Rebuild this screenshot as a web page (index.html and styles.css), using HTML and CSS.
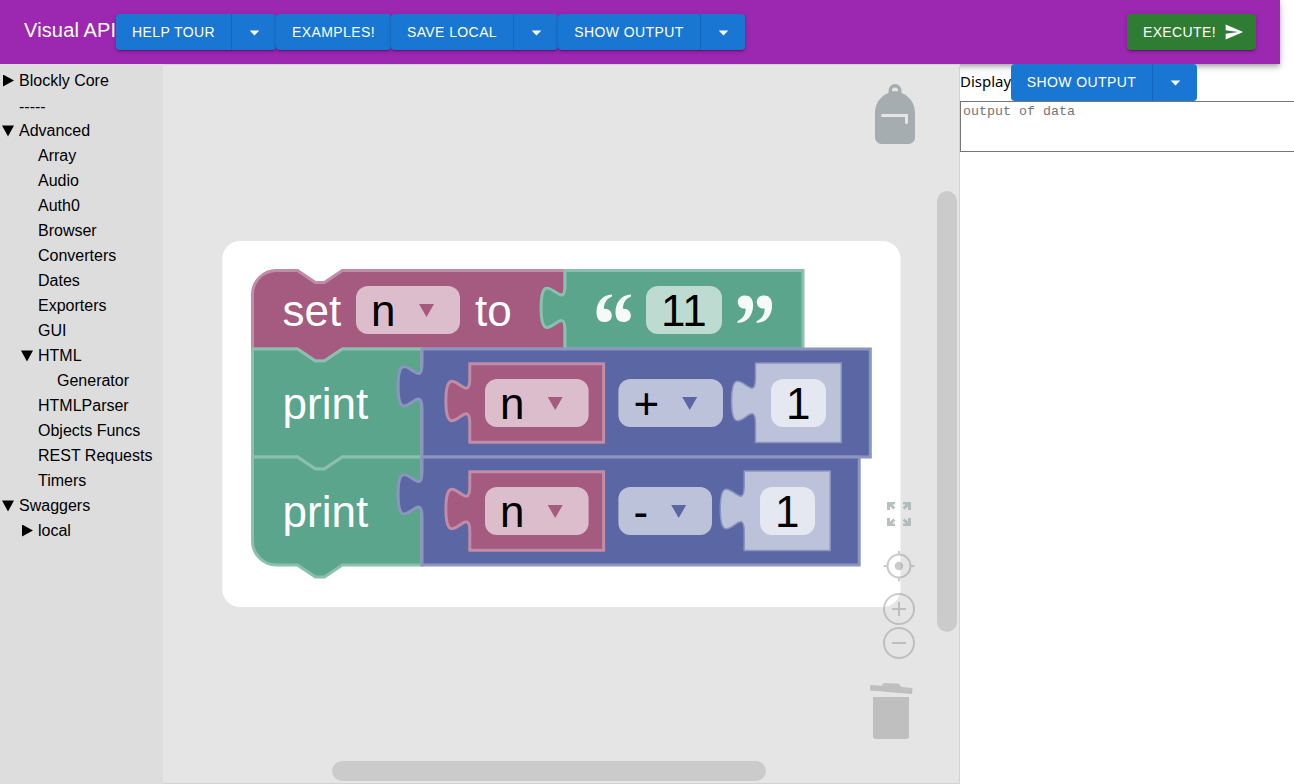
FILE: index.html
```html
<!DOCTYPE html>
<html lang="en">
<head>
<meta charset="utf-8">
<title>Visual API</title>
<link rel="stylesheet" href="styles.css">
</head>
<body>
<header class="appbar">
  <div class="title">Visual API</div>
  <div class="group help"><button class="btn">HELP TOUR</button><button class="btn caret"><svg width="23" height="23" viewBox="0 0 24 24"><path d="m7 10 5 5 5-5z"/></svg></button></div>
  <div class="group examples"><button class="btn">EXAMPLES!</button></div>
  <div class="group save"><button class="btn">SAVE LOCAL</button><button class="btn caret"><svg width="23" height="23" viewBox="0 0 24 24"><path d="m7 10 5 5 5-5z"/></svg></button></div>
  <div class="group show"><button class="btn">SHOW OUTPUT</button><button class="btn caret"><svg width="23" height="23" viewBox="0 0 24 24"><path d="m7 10 5 5 5-5z"/></svg></button></div>
  <div class="group execute"><button class="btn">EXECUTE!<svg width="20" height="20" viewBox="0 0 24 24"><path d="M2.01 21 23 12 2.01 3 2 10l15 2-15 2z"/></svg></button></div>
</header>
<main class="content">
  <nav class="toolbox">
    <div class="row"><i class="arrow closed"></i>Blockly Core</div>
    <div class="row sep"><i class="arrow"></i>-----</div>
    <div class="row"><i class="arrow open"></i>Advanced</div>
    <div class="row l1"><i class="arrow"></i>Array</div>
    <div class="row l1"><i class="arrow"></i>Audio</div>
    <div class="row l1"><i class="arrow"></i>Auth0</div>
    <div class="row l1"><i class="arrow"></i>Browser</div>
    <div class="row l1"><i class="arrow"></i>Converters</div>
    <div class="row l1"><i class="arrow"></i>Dates</div>
    <div class="row l1"><i class="arrow"></i>Exporters</div>
    <div class="row l1"><i class="arrow"></i>GUI</div>
    <div class="row l1"><i class="arrow open"></i>HTML</div>
    <div class="row l2"><i class="arrow"></i>Generator</div>
    <div class="row l1"><i class="arrow"></i>HTMLParser</div>
    <div class="row l1"><i class="arrow"></i>Objects Funcs</div>
    <div class="row l1"><i class="arrow"></i>REST Requests</div>
    <div class="row l1"><i class="arrow"></i>Timers</div>
    <div class="row"><i class="arrow open"></i>Swaggers</div>
    <div class="row l1"><i class="arrow closed"></i>local</div>
  </nav>
  <svg class="workspace" width="797" height="720" viewBox="163 64 797 720">
    <rect class="ws-bg" x="163" y="64" width="797" height="720"/>
    <path class="ws-edge" d="M163 64.5H959.5V783.5H163"/>
    <rect x="222.3" y="241" width="678.2" height="366" rx="18" fill="#fff"/>

    <!-- statement blocks -->
    <path class="variable" d="M252.5 349V294.5A24 24 0 0 1 276.5 270.5H297.5L315.4 282.6H324.4L342.3 270.5H565V349H342.3L324.4 361H315.4L297.5 349Z"/>
    <path class="text" d="M252.5 349H297.5L315.4 361H324.4L342.3 349H422V457H342.3L324.4 469H315.4L297.5 457H252.5Z"/>
    <path class="text" d="M252.5 457H297.5L315.4 469H324.4L342.3 457H422V565H342.3L324.4 577H315.4L297.5 565H276.5A24 24 0 0 1 252.5 541Z"/>

    <!-- value blocks -->
    <path class="text" d="M565 270.5H803V349H565V330.2c0-29.9-23.9 23.9-23.9-22.4s23.9 7.5 23.9-22.4Z"/>
    <path class="math" d="M422 349H870.3V457H422V408.7c0-29.9-23.9 23.9-23.9-22.4s23.9 7.5 23.9-22.4Z"/>
    <path class="math" d="M422 457H859.2V565H422V516.7c0-29.9-23.9 23.9-23.9-22.4s23.9 7.5 23.9-22.4Z"/>
    <path class="variable" d="M469.8 363.7H603.6V442.2H469.8V423.4c0-29.9-23.9 23.9-23.9-22.4s23.9 7.5 23.9-22.4Z"/>
    <path class="variable" d="M469.8 471.7H603.6V550.2H469.8V531.4c0-29.9-23.9 23.9-23.9-22.4s23.9 7.5 23.9-22.4Z"/>
    <path class="shadow" d="M755.5 363H841.2V442.5H755.5V423.4c0-29.9-23.9 23.9-23.9-22.4s23.9 7.5 23.9-22.4Z"/>
    <path class="shadow" d="M744.2 471H830.2V550.5H744.2V531.4c0-29.9-23.9 23.9-23.9-22.4s23.9 7.5 23.9-22.4Z"/>

    <!-- editable fields -->
    <g class="f-var">
      <rect x="356" y="286" width="104" height="48" rx="12"/>
      <rect x="485" y="379" width="103.6" height="48" rx="12"/>
      <rect x="485" y="487" width="103.6" height="48" rx="12"/>
    </g>
    <rect class="f-text" x="646" y="286" width="76" height="48" rx="12"/>
    <g class="f-math">
      <rect x="618.4" y="379" width="104.6" height="48" rx="12"/>
      <rect x="618.4" y="487" width="93.6" height="48" rx="12"/>
    </g>
    <g class="f-num">
      <rect x="771" y="379" width="55" height="48" rx="12"/>
      <rect x="760" y="487" width="55" height="48" rx="12"/>
    </g>
    <path class="v-arrow" d="M419 304h15l-7.5 13zM547.7 397h15l-7.5 13zM547.7 505h15l-7.5 13z"/>
    <path class="m-arrow" d="M682.2 397h15l-7.5 13zM671.2 505h15l-7.5 13z"/>

    <g class="label light">
      <text x="282.6" y="326">set</text><text x="475" y="326">to</text>
      <text x="282.6" y="419">print</text><text x="282.6" y="527">print</text>
    </g>
    <g class="label">
      <text x="371" y="326">n</text><text x="661" y="326">11</text>
      <text x="500" y="419">n</text><text x="633.5" y="419">+</text><text x="786" y="419">1</text>
      <text x="500" y="527">n</text><text x="633.5" y="527">-</text><text x="775" y="527">1</text>
    </g>
    <g class="quotes">
      <path id="quote" d="M612 294.500C602 294.500 596.500 303 596.500 312C596.500 319 599.500 322 604.500 322C609 322 611.800 319.500 611.800 315.700C611.800 311.500 609 308.500 604 308.800C603.800 303.500 606.500 298.500 612 296.500Z"/>
      <use href="#quote" x="19"/>
      <use href="#quote" transform="rotate(180 684.3 308.7)"/>
      <use href="#quote" transform="rotate(180 684.3 308.7) translate(19 0)"/>
    </g>

    <!-- backpack -->
    <path fill="#a5adb0" fill-rule="evenodd" d="M888.500 93V90.500a6.500 6.500 0 0 1 13 0V93C909.500 96 915 103.500 915 113V137.500A6.500 6.500 0 0 1 908.500 144H881.500A6.500 6.500 0 0 1 875 137.500V113C875 103.500 880.500 96 888.500 93ZM892 91.300H898V90.500a3 3 0 0 0-6 0ZM881.300 114V117H905V122.500a1.500 1.500 0 0 0 3 0V114Z"/>
    <!-- zoom to fit -->
    <g fill="#a5b1b4" fill-opacity=".8">
      <path id="corner" d="M887 502h8v2.400h-2.600l3 3.200-2 2-3.400-3.200V510H887Z"/>
      <use href="#corner" transform="matrix(-1 0 0 1 1798 0)"/>
      <use href="#corner" transform="matrix(1 0 0 -1 0 1028)"/>
      <use href="#corner" transform="matrix(-1 0 0 -1 1798 1028)"/>
    </g>
    <g class="control">
      <circle cx="899" cy="566" r="11.500"/><path d="M899 551v4M899 577.500v4M883.500 566h4M910.500 566h4"/>
      <circle class="dot" cx="899" cy="566" r="4.300"/>
      <circle cx="899" cy="609" r="15"/><path d="M892 609h14M899 602v14"/>
      <circle cx="899" cy="643" r="15"/><path d="M892 643h14"/>
    </g>
    <g fill="#bfbfbf">
      <path d="M873 697H909V736a3 3 0 0 1-3 3H876a3 3 0 0 1-3-3Z"/>
      <path d="M870.300 685 881.500 685.700 884 683 899 683.800 901.500 686.900 912.500 688 912 694 870 690.500Z"/>
    </g>
    <rect class="scroll" x="937" y="191" width="20" height="441" rx="10"/>
    <rect class="scroll" x="332" y="761" width="434" height="20" rx="10"/>
  </svg>
  <section class="output">
    <div class="output-bar"><span class="display">Display</span>
      <div class="group show flat"><button class="btn">SHOW OUTPUT</button><button class="btn caret"><svg width="23" height="23" viewBox="0 0 24 24"><path d="m7 10 5 5 5-5z"/></svg></button></div>
    </div>
    <textarea class="data" placeholder="output of data"></textarea>
  </section>
</main>
</body>
</html>
```
FILE: styles.css
```css
* { box-sizing: border-box; }
body {
  margin: 0;
  height: 784px;
  overflow: hidden;
  font-family: "Liberation Sans", Arial, sans-serif;
  background: #fff;
}
.appbar {
  display: flex;
  align-items: center;
  width: 1280px;
  height: 64px;
  padding: 0 24px;
  background: #9c27b0;
  box-shadow: 0 2px 4px -1px rgba(0,0,0,.2), 0 4px 5px rgba(0,0,0,.14), 0 1px 10px rgba(0,0,0,.12);
}
.title {
  width: 92px;
  padding-bottom: 4px;
  font-size: 20px;
  letter-spacing: .15px;
  white-space: nowrap;
  color: #fff;
}
.group {
  display: flex;
  height: 36px;
  border-radius: 4px;
  background: #1976d2;
  box-shadow: 0 3px 1px -2px rgba(0,0,0,.2), 0 2px 2px rgba(0,0,0,.14), 0 1px 5px rgba(0,0,0,.12);
}
.btn {
  display: flex;
  flex: 1;
  align-items: center;
  justify-content: center;
  padding: 0;
  border: 0;
  background: none;
  color: #fff;
  font: 14px/24px "Liberation Sans", Arial, sans-serif;
  letter-spacing: .4px;
  white-space: nowrap;
}
.btn svg { fill: currentColor; }
.caret { flex: 0 0 45px; border-left: 1px solid #1565c0; }
.help { width: 160px; }
.examples { width: 115px; }
.save { width: 167px; }
.show { width: 187px; }
.execute { width: 129px; margin-left: auto; background: #2e7d32; }
.execute .btn { gap: 8px; padding-left: 4px; }
.content { display: flex; height: 720px; }
.toolbox {
  flex: 0 0 163px;
  position: relative;
  padding-top: 4px;
  background: #ddd;
}
.row {
  display: flex;
  align-items: center;
  height: 25px;
  padding-left: 2px;
  font-size: 16px;
  line-height: 22px;
  white-space: nowrap;
}
.sep { padding-top: 2px; }
.l1 { padding-left: 21px; }
.l2 { padding-left: 40px; }
.arrow { flex: 0 0 12px; height: 12px; margin-right: 5px; }
.open { background: #000; clip-path: polygon(0 1px, 12px 1px, 6px 12px); }
.closed { background: #000; clip-path: polygon(1px 0, 12px 6px, 1px 12px); }
.workspace { position: relative; flex: none; display: block; }
.ws-bg { fill: #e5e5e5; }
.ws-edge { fill: none; stroke: #d3d3d3; }
.variable, .text, .math { stroke-width: 3px; }
.variable { fill: #a55b80; stroke: #c08ca6; }
.text { fill: #5ba58c; stroke: #8cc0ae; }
.math { fill: #5b67a5; stroke: #8c94c0; }
.shadow { fill: #bdc2db; stroke: #8c94c0; stroke-width: 1.5px; }
.f-var { fill: #dbbdcc; }
.f-text { fill: #bddbd1; }
.f-math { fill: #bdc2db; }
.f-num { fill: #e5e7f1; }
.v-arrow { fill: #a55b80; }
.m-arrow { fill: #5b67a5; }
.label { font-size: 44px; fill: #000; }
.light { fill: #fff; }
.quotes { fill: #fff; fill-opacity: .94; filter: blur(.7px); }
.control { fill: none; stroke: #999; stroke-width: 2px; opacity: .5; }
.dot { fill: #999; stroke: none; }
.scroll { fill: #cbcbcb; }
.output { flex: 1; min-width: 0; }
.output-bar { display: flex; height: 37px; }
.display {
  width: 51px;
  font: 15px/34px "Noto Sans", sans-serif;
  white-space: nowrap;
}
.flat { position: relative; height: 37px; width: 186px; box-shadow: none; }
.flat .btn { padding-bottom: 1px; }
.data {
  display: block;
  width: 100%;
  height: 51px;
  margin: 0;
  padding: 2px;
  border: 1px solid #767676;
  border-right: 0;
  border-radius: 0;
  resize: none;
  background: #fff;
  font: 13.333px "Liberation Mono", monospace;
}
.data::placeholder { color: #757575; }
```
